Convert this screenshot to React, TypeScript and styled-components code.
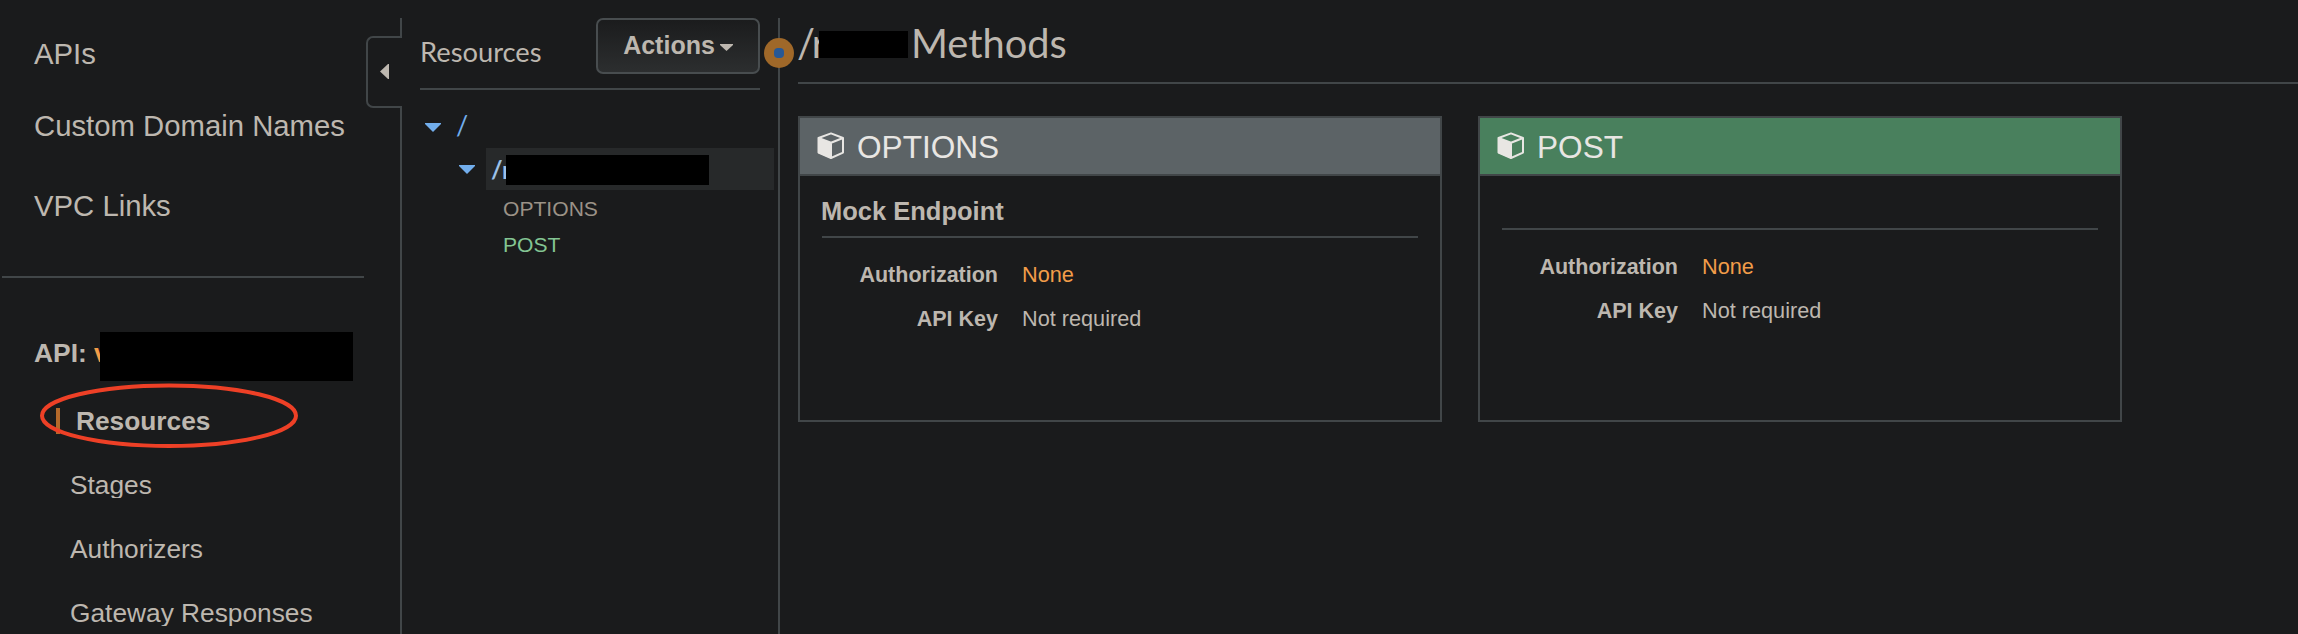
import React from "react";
import styled, { createGlobalStyle } from "styled-components";

const color = {
  bg: "#1a1b1c",
  line: "#414648",
  text: "#bdb7af",
  muted: "#9b9287",
  blue: "#72aeec",
  orange: "#f29d49",
  green: "#83c593",
};

const sans = `"Liberation Sans", Arial, sans-serif`;
const lato = `Lato, "Liberation Sans", sans-serif`;

const GlobalStyle = createGlobalStyle`
  * { box-sizing: border-box; }
  html, body { margin: 0; background: ${color.bg}; overflow: hidden; }
  body { font-family: ${sans}; color: ${color.text}; }
  h1, h2, h3, p { margin: 0; font-weight: normal; }
`;

const Page = styled.div`
  display: flex;
  height: 634px;
  padding-top: 18px;
  background: ${color.bg};
  white-space: nowrap;
`;

const Sidebar = styled.nav`
  position: relative;
  width: 402px;
  flex: none;
  border-right: 2px solid ${color.line};
  padding-top: 16px;
`;

const CollapseTab = styled.button`
  position: absolute;
  top: 18px;
  right: -2px;
  width: 36px;
  height: 72px;
  padding: 0 0 2px 12px;
  display: flex;
  align-items: center;
  background: ${color.bg};
  border: 2px solid ${color.line};
  border-right: 0;
  border-radius: 7px 0 0 7px;
`;

const NavLink = styled.div<{ $gap?: number }>`
  margin-top: ${(p) => p.$gap ?? 0}px;
  padding-left: 34px;
  font-size: 29.3px;
  line-height: 40px;
`;

const NavDivider = styled.div`
  margin: 50px 36px 0 2px;
  height: 2px;
  background: ${color.line};
`;

const ApiName = styled.div`
  display: flex;
  align-items: center;
  margin-top: 55px;
  padding-left: 34px;
  height: 40px;
  font-size: 26.4px;
  font-weight: bold;
  line-height: 40px;
`;

const ClippedText = styled.span<{ $width: number; $color?: string }>`
  width: ${(p) => p.$width}px;
  flex: none;
  overflow: hidden;
  color: ${(p) => p.$color ?? "inherit"};
`;

const Redaction = styled.span<{ $width: number; $height: number; $top?: number }>`
  flex: none;
  width: ${(p) => p.$width}px;
  height: ${(p) => p.$height}px;
  margin-top: ${(p) => p.$top ?? 0}px;
  background: #000;
`;

const SubNav = styled.div`
  display: flex;
  flex-direction: column;
  gap: 38px;
  margin-top: 35px;
`;

const SubLink = styled.div<{ $active?: boolean }>`
  height: 26px;
  line-height: 26px;
  font-size: 26.3px;
  overflow: hidden;
  margin-left: ${(p) => (p.$active ? 56 : 70)}px;
  padding-left: ${(p) => (p.$active ? 16 : 0)}px;
  border-left: ${(p) => (p.$active ? "4px solid #b4692a" : "0")};
  font-weight: ${(p) => (p.$active ? "bold" : "normal")};
`;

const Highlight = styled.svg`
  position: absolute;
  left: 39px;
  top: 364px;
`;

const ResourcePanel = styled.section`
  position: relative;
  width: 378px;
  flex: none;
  border-right: 2px solid ${color.line};
`;

const PanelHeader = styled.header`
  display: flex;
  justify-content: space-between;
  margin: 0 18px;
  height: 72px;
  border-bottom: 2px solid ${color.line};
`;

const PanelTitle = styled.h2`
  font: 27.3px/40px ${lato};
  padding-top: 14px;
`;

const ActionsButton = styled.button`
  width: 164px;
  height: 56px;
  display: flex;
  justify-content: center;
  align-items: center;
  gap: 5px;
  padding: 0 0 2px;
  border: 2px solid #484d4f;
  border-radius: 7px;
  background: linear-gradient(#1b1c1d, #2c2e2f);
  color: ${color.text};
  font: bold 25px/40px ${sans};

  svg {
    margin-top: 4px;
  }
`;

const Tree = styled.div`
  padding-top: 16px;
`;

const TreeRow = styled.div<{ $indent: number }>`
  display: flex;
  align-items: center;
  height: 42px;
  padding-left: ${(p) => p.$indent}px;
`;

const RootPath = styled.span`
  margin-left: 15px;
  padding-bottom: 5px;
  font: 27px/37px ${lato};
  color: ${color.blue};
`;

const SelectedNode = styled.div`
  display: flex;
  align-items: center;
  width: 288px;
  height: 42px;
  margin-left: 11px;
  padding-left: 5px;
  background: #27292a;
  font: bold 25px/42px ${lato};
  color: #9cc1e8;
`;

const MethodList = styled.div`
  padding: 1px 0 0 101px;
`;

const MethodLink = styled.div<{ $color: string }>`
  font-size: 21.1px;
  line-height: 36px;
  color: ${(p) => p.$color};
`;

const DragHandle = styled.div`
  position: absolute;
  top: 20px;
  right: -16px;
  width: 30px;
  height: 30px;
  border-radius: 50%;
  background: #9f6829;
  display: flex;
  align-items: center;
  justify-content: center;
  z-index: 1;

  &::after {
    content: "";
    width: 10px;
    height: 10px;
    border-radius: 4px;
    background: #265896;
  }
`;

const Main = styled.main`
  flex: 1;
  padding-left: 18px;
`;

const MainTitle = styled.h1`
  display: flex;
  height: 66px;
  border-bottom: 2px solid ${color.line};
  font: 39.8px/50px ${lato};
`;

const TitlePath = styled(ClippedText)`
  letter-spacing: -2px;
  text-indent: -1px;
`;

const TitleWord = styled.span`
  margin-left: 3px;
`;

const Cards = styled.div`
  display: flex;
  gap: 36px;
  margin-top: 32px;
`;

const Card = styled.article`
  width: 644px;
  height: 306px;
  border: 2px solid ${color.line};
`;

const CardHeader = styled.header<{ $color: string }>`
  display: flex;
  align-items: center;
  gap: 12px;
  height: 58px;
  padding-left: 17px;
  border-bottom: 2px solid ${color.line};
  background: ${(p) => p.$color};
  color: #e8e6e3;
`;

const CardTitle = styled.h2`
  padding-top: 2px;
  font-size: 31.6px;
  line-height: 54px;
`;

const CardBody = styled.div`
  padding: 0 22px;
`;

const Endpoint = styled.h3<{ $height: number }>`
  height: ${(p) => p.$height}px;
  padding-top: 15px;
  border-bottom: 2px solid ${color.line};
  font-size: 25.5px;
  line-height: 40px;
  font-weight: bold;
  text-indent: -1px;
`;

const Fields = styled.dl`
  display: grid;
  grid-template-columns: 176px 1fr;
  column-gap: 24px;
  margin: 15px 0 0;
  font-size: 21.7px;
  line-height: 44px;
`;

const Label = styled.dt`
  text-align: right;
  font-size: 21.5px;
  font-weight: bold;
`;

const Value = styled.dd<{ $accent?: boolean }>`
  margin: 0;
  color: ${(p) => (p.$accent ? color.orange : "inherit")};
`;

const Caret = ({ w, h, fill }: { w: number; h: number; fill: string }) => (
  <svg width={w} height={h} viewBox={`0 0 ${w} ${h}`}>
    <path d={`M0 0H${w}V1L${w / 2} ${h}L0 1Z`} fill={fill} />
  </svg>
);

const CubeIcon = () => (
  <svg width="28" height="28" viewBox="0 0 28 28" fill="none">
    <path
      d="M1.5 6L14 1.4L26 6V20.6L14 26L1.5 20.6Z M1.5 6L14 10.8L26 6 M14 10.8V26"
      stroke="#e8e6e3"
      strokeWidth="2"
      strokeLinejoin="round"
    />
    <path d="M1 6L14 10.8V26.5L1 21Z" fill="#e8e6e3" />
  </svg>
);

type Method = { name: string; tint: string; endpoint: string; headHeight: number };

const methods: Method[] = [
  { name: "OPTIONS", tint: "#5c6366", endpoint: "Mock Endpoint", headHeight: 62 },
  { name: "POST", tint: "#49805d", endpoint: "", headHeight: 54 },
];

export default function App() {
  return (
    <>
      <GlobalStyle />
      <Page>
        <Sidebar>
          <NavLink>APIs</NavLink>
          <NavLink $gap={32}>Custom Domain Names</NavLink>
          <NavLink $gap={40}>VPC Links</NavLink>
          <NavDivider />
          <ApiName>
            <ClippedText $width={60}>API:</ClippedText>
            <ClippedText $width={6} $color={color.orange}>v</ClippedText>
            <Redaction $width={253} $height={49} $top={7} />
          </ApiName>
          <SubNav>
            <SubLink $active>Resources</SubLink>
            <SubLink>Stages</SubLink>
            <SubLink>Authorizers</SubLink>
            <SubLink>Gateway Responses</SubLink>
          </SubNav>
          <CollapseTab aria-label="Collapse">
            <svg width="9" height="15" viewBox="0 0 9 15">
              <path d="M9 0V15H8L0 7.5L8 0Z" fill={color.text} />
            </svg>
          </CollapseTab>
          <Highlight width="261" height="68" viewBox="0 0 261 68" fill="none">
            <ellipse cx="130" cy="33.7" rx="127" ry="30.3" stroke="#ee4026" strokeWidth="4" />
          </Highlight>
        </Sidebar>

        <ResourcePanel>
          <PanelHeader>
            <PanelTitle>Resources</PanelTitle>
            <ActionsButton>
              Actions
              <Caret w={13} h={7} fill={color.text} />
            </ActionsButton>
          </PanelHeader>
          <Tree>
            <TreeRow $indent={23}>
              <Caret w={16} h={9} fill={color.blue} />
              <RootPath>/</RootPath>
            </TreeRow>
            <TreeRow $indent={57}>
              <Caret w={16} h={9} fill={color.blue} />
              <SelectedNode>
                <ClippedText $width={15}>/r</ClippedText>
                <Redaction $width={203} $height={30} $top={2} />
              </SelectedNode>
            </TreeRow>
            <MethodList>
              <MethodLink $color={color.muted}>OPTIONS</MethodLink>
              <MethodLink $color={color.green}>POST</MethodLink>
            </MethodList>
          </Tree>
          <DragHandle />
        </ResourcePanel>

        <Main>
          <MainTitle>
            <TitlePath $width={21}>/r</TitlePath>
            <Redaction $width={89} $height={27} $top={13} />
            <TitleWord>Methods</TitleWord>
          </MainTitle>
          <Cards>
            {methods.map((m) => (
              <Card key={m.name}>
                <CardHeader $color={m.tint}>
                  <CubeIcon />
                  <CardTitle>{m.name}</CardTitle>
                </CardHeader>
                <CardBody>
                  <Endpoint $height={m.headHeight}>{m.endpoint}</Endpoint>
                  <Fields>
                    <Label>Authorization</Label>
                    <Value $accent>None</Value>
                    <Label>API Key</Label>
                    <Value>Not required</Value>
                  </Fields>
                </CardBody>
              </Card>
            ))}
          </Cards>
        </Main>
      </Page>
    </>
  );
}
